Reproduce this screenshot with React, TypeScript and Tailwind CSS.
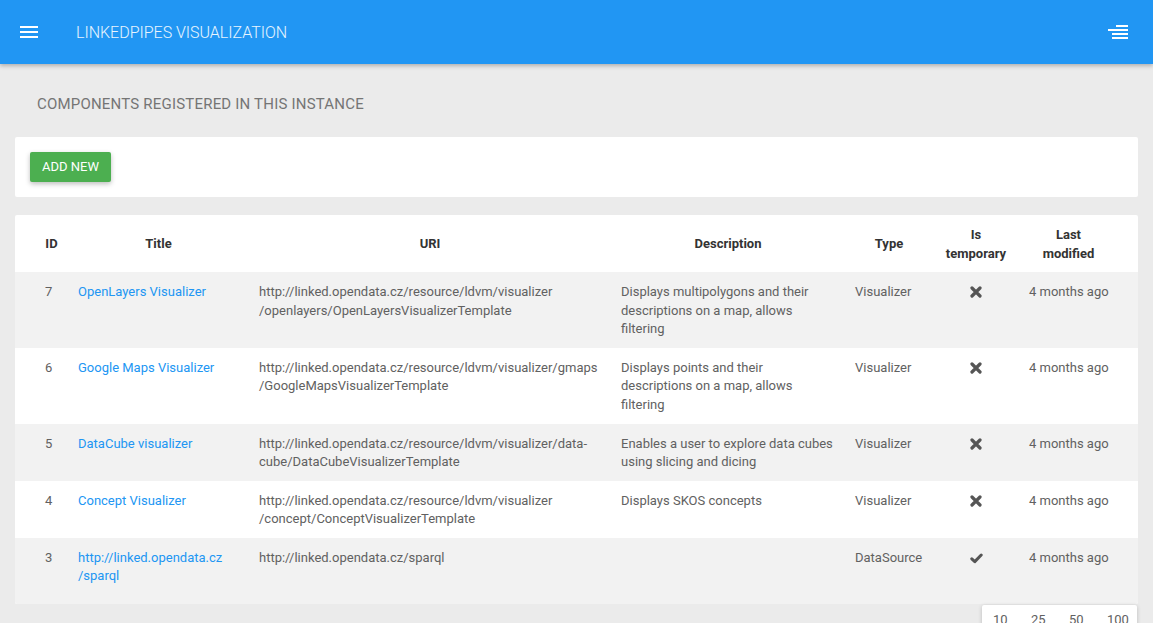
import React from "react";

type Row = {
  id: string;
  title: React.ReactNode;
  uri: React.ReactNode;
  desc: React.ReactNode;
  type: string;
  temp: boolean;
  last: string;
};

const rows: Row[] = [
  {
    id: "7",
    title: "OpenLayers Visualizer",
    uri: (
      <>
        http://linked.opendata.cz/resource/ldvm/visualizer
        <br />
        /openlayers/OpenLayersVisualizerTemplate
      </>
    ),
    desc: (
      <>
        Displays multipolygons and their
        <br />
        descriptions on a map, allows
        <br />
        filtering
      </>
    ),
    type: "Visualizer",
    temp: false,
    last: "4 months ago",
  },
  {
    id: "6",
    title: "Google Maps Visualizer",
    uri: (
      <>
        http://linked.opendata.cz/resource/ldvm/visualizer/gmaps
        <br />
        /GoogleMapsVisualizerTemplate
      </>
    ),
    desc: (
      <>
        Displays points and their
        <br />
        descriptions on a map, allows
        <br />
        filtering
      </>
    ),
    type: "Visualizer",
    temp: false,
    last: "4 months ago",
  },
  {
    id: "5",
    title: "DataCube visualizer",
    uri: (
      <>
        http://linked.opendata.cz/resource/ldvm/visualizer/data-
        <br />
        cube/DataCubeVisualizerTemplate
      </>
    ),
    desc: (
      <>
        Enables a user to explore data cubes
        <br />
        using slicing and dicing
      </>
    ),
    type: "Visualizer",
    temp: false,
    last: "4 months ago",
  },
  {
    id: "4",
    title: "Concept Visualizer",
    uri: (
      <>
        http://linked.opendata.cz/resource/ldvm/visualizer
        <br />
        /concept/ConceptVisualizerTemplate
      </>
    ),
    desc: <>Displays SKOS concepts</>,
    type: "Visualizer",
    temp: false,
    last: "4 months ago",
  },
  {
    id: "3",
    title: (
      <>
        http://linked.opendata.cz
        <br />
        /sparql
      </>
    ),
    uri: <>http://linked.opendata.cz/sparql</>,
    desc: <></>,
    type: "DataSource",
    temp: true,
    last: "4 months ago",
  },
];

function CrossIcon() {
  return (
    <svg width="12" height="12" viewBox="0 0 12 12" className="block">
      <path
        d="M2 2 L10 10 M10 2 L2 10"
        stroke="#555"
        strokeWidth="3.2"
        strokeLinecap="round"
        fill="none"
      />
    </svg>
  );
}

function CheckIcon() {
  return (
    <svg width="13" height="11" viewBox="0 0 13 11" className="block">
      <path
        d="M1.8 5.8 L4.8 8.6 L11.2 2"
        stroke="#555"
        strokeWidth="3"
        strokeLinecap="round"
        strokeLinejoin="round"
        fill="none"
      />
    </svg>
  );
}

export default function App() {
  return (
    <div
      className="min-h-[623px] bg-[#ebebeb] text-[13px] leading-[1.42857] text-[#616161]"
      style={{ fontFamily: "Roboto, 'Liberation Sans', sans-serif" }}
    >
      <header className="h-16 bg-[#2196f3] shadow-[0_2px_4px_rgba(0,0,0,0.25)] flex items-center pl-[20px] pr-[25px] relative z-10">
        <svg width="18" height="12" viewBox="0 0 18 12" className="block">
          <rect x="0" y="0" width="18" height="2" fill="#fff" />
          <rect x="0" y="5" width="18" height="2" fill="#fff" />
          <rect x="0" y="10" width="18" height="2" fill="#fff" />
        </svg>
        <div className="ml-[38px] text-[16px] font-light text-white/90 tracking-[-0.02px] mt-[2px]">
          LINKEDPIPES VISUALIZATION
        </div>
        <div className="ml-auto">
          <svg width="20" height="14" viewBox="0 0 20 14" className="block">
            <rect x="8" y="0" width="12" height="2" fill="#fff" />
            <rect x="0" y="4" width="20" height="2" fill="#fff" />
            <rect x="4" y="8" width="16" height="2" fill="#fff" />
            <rect x="4" y="12" width="16" height="2" fill="#fff" />
          </svg>
        </div>
      </header>

      <main className="px-[15px]">
        <h2 className="pt-[30px] pb-[23px] pl-[22px] text-[15px] leading-[20px] text-[#757575] font-normal tracking-[0.2px]">
          COMPONENTS REGISTERED IN THIS INSTANCE
        </h2>

        <div className="bg-white rounded-[2px] p-[15px] mb-[18px]">
          <button className="h-[30px] px-[12px] bg-[#4caf50] text-white text-[13px] rounded-[2px] shadow-[0_2px_5px_rgba(0,0,0,0.26)] pt-px">
            ADD NEW
          </button>
        </div>

        <div className="bg-white rounded-[2px] overflow-hidden">
          <table className="w-full table-fixed border-collapse">
            <colgroup>
              <col className="w-[53px]" />
              <col className="w-[181px]" />
              <col className="w-[362px]" />
              <col className="w-[234px]" />
              <col className="w-[88px]" />
              <col className="w-[86px]" />
              <col className="w-[119px]" />
            </colgroup>
            <thead>
              <tr className="text-[#333] font-bold">
                <th className="pl-[30px] pr-[10px] pt-[11px] pb-[9px] align-middle text-center font-bold">ID</th>
                <th className="px-[10px] pt-[11px] pb-[9px] align-middle text-center font-bold">Title</th>
                <th className="px-[10px] pt-[11px] pb-[9px] align-middle text-center font-bold">URI</th>
                <th className="px-[10px] pt-[11px] pb-[9px] align-middle text-center font-bold">Description</th>
                <th className="px-[10px] pt-[11px] pb-[9px] align-middle text-center font-bold">Type</th>
                <th className="px-[10px] pt-[11px] pb-[9px] align-middle text-center font-bold">
                  Is
                  <br />
                  temporary
                </th>
                <th className="pl-[10px] pr-[30px] pt-[11px] pb-[9px] align-middle text-center font-bold whitespace-nowrap">
                  Last
                  <br />
                  modified
                </th>
              </tr>
            </thead>
            <tbody>
              {rows.map((r, i) => {
                const py = i === rows.length - 1 ? "pt-[11px] pb-[18px]" : "pt-[11px] pb-[9px]";
                return (
                  <tr key={r.id} className={i % 2 === 0 ? "bg-[#f2f2f2]" : "bg-white"}>
                    <td className={`pl-[30px] pr-[10px] ${py} align-top`}>{r.id}</td>
                    <td className={`px-[10px] ${py} align-top text-[#2196f3]`}>{r.title}</td>
                    <td className={`px-[10px] ${py} align-top`}>{r.uri}</td>
                    <td className={`px-[10px] ${py} align-top`}>{r.desc}</td>
                    <td className={`px-[10px] ${py} align-top`}>{r.type}</td>
                    <td className={`px-[10px] ${py} align-top`}>
                      <div className="flex h-[18.57px] items-center justify-center">
                        {r.temp ? <CheckIcon /> : <CrossIcon />}
                      </div>
                    </td>
                    <td className={`pl-[10px] pr-[30px] ${py} align-top text-center whitespace-nowrap`}>
                      {r.last}
                    </td>
                  </tr>
                );
              })}
            </tbody>
          </table>
        </div>

        <div className="flex justify-end mt-px pr-px">
          <div className="bg-white rounded-[2px] shadow-[0_1px_4px_rgba(0,0,0,0.2)] flex pt-[6px] pb-[6px] w-[155px]">
            <span className="w-[38px] pl-[11px]">10</span>
            <span className="w-[38px] pl-[11px]">25</span>
            <span className="w-[38px] pl-[11px]">50</span>
            <span className="pl-[11px]">100</span>
          </div>
        </div>
      </main>
    </div>
  );
}
